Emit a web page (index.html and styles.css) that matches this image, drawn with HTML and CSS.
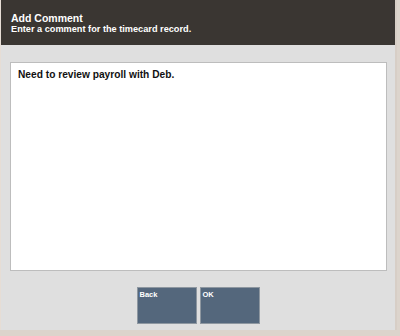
FILE: index.html
```html
<!DOCTYPE html>
<html>
<head>
<meta charset="utf-8">
<link rel="stylesheet" href="styles.css">
</head>
<body>
<div class="screen">
  <div class="header">
    <div class="title">Add Comment</div>
    <div class="subtitle">Enter a comment for the timecard record.</div>
  </div>
  <div class="main">
    <div class="comment-box">Need to review payroll with Deb.</div>
    <div class="buttons">
      <div class="btn">Back</div>
      <div class="btn">OK</div>
    </div>
  </div>
</div>
</body>
</html>
```
FILE: styles.css
```css
html, body {
  margin: 0;
  padding: 0;
  width: 400px;
  height: 336px;
  overflow: hidden;
  background: #dcd4cc;
  font-family: "Liberation Sans", Arial, sans-serif;
}
.screen {
  width: 397px;
  height: 330px;
  display: flex;
  flex-direction: column;
  border-left: 1px solid #e6ddd5;
  border-right: 2px solid #d7cec6;
  box-sizing: border-box;
  background: #dfdfdf;
}
.header {
  background: #3a3632;
  height: 45px;
  box-sizing: border-box;
  padding: 12px 0 0 10px;
  color: #ffffff;
  font-weight: bold;
}
.title {
  font-size: 10.5px;
  line-height: 12px;
}
.subtitle {
  font-size: 9.2px;
  line-height: 11px;
}
.main {
  flex: 1;
  display: flex;
  flex-direction: column;
  padding: 17px 8px 0 9px;
}
.comment-box {
  background: #ffffff;
  border: 1px solid #bdbdbd;
  height: 209px;
  box-sizing: border-box;
  padding: 6px 7px;
  font-size: 10.2px;
  font-weight: bold;
  color: #111;
}
.buttons {
  display: flex;
  justify-content: center;
  gap: 3px;
  padding-top: 16px;
  padding-right: 1px;
}
.btn {
  width: 60px;
  height: 37px;
  box-sizing: border-box;
  background: #54677c;
  border: 1px solid #8e97a0;
  color: #ffffff;
  font-size: 7.5px;
  font-weight: bold;
  padding: 2px 2px;
}
```
